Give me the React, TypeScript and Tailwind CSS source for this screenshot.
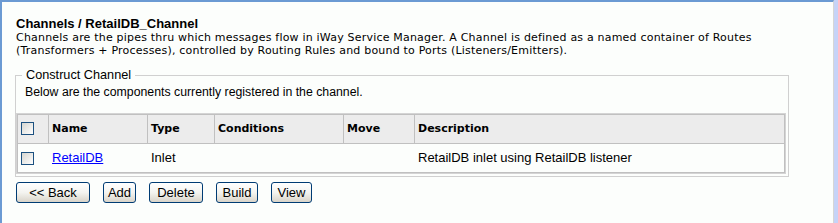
import React from "react";

function Check() {
  return (
    <span className="inline-block w-[13px] h-[13px] border border-[#1c5180] bg-linear-to-br from-[#d6d6d0] to-[#ffffff] align-middle" />
  );
}

const buttons: { label: string; w: string }[] = [
  { label: "<< Back", w: "w-[74px]" },
  { label: "Add", w: "w-[33px]" },
  { label: "Delete", w: "w-[54px]" },
  { label: "Build", w: "w-[42px]" },
  { label: "View", w: "w-[41px]" },
];

export default function App() {
  const th =
    "h-[30px] border-t border-r border-b border-[#c0c0c0] bg-[#ececec] pl-[3px] text-left align-middle font-['DejaVu_Sans',Verdana,sans-serif] text-[11px] font-bold";
  const td = "h-[29px] border-b border-[#c0c0c0] pl-[3px] text-left align-middle text-[13px]";
  return (
    <div className="flex w-[838px] h-[223px] overflow-hidden">
      <div className="w-[834px] h-full border-l-2 border-t-2 border-l-[#6b9ad3] border-t-[#6b9ad3] border-r border-r-[#d6d6d6] bg-[#fcfefc] pl-[14px] pt-[14px] font-['Liberation_Sans',Arial,sans-serif] text-black">
        <div className="text-[13px] leading-[15px] font-bold">Channels / RetailDB_Channel</div>
        <p className="font-['DejaVu_Sans',Verdana,sans-serif] text-[11px] leading-[13px] tracking-[0.2px]">
          Channels are the pipes thru which messages flow in iWay Service Manager. A Channel is defined as a named container of Routes
          <br />
          (Transformers + Processes), controlled by Routing Rules and bound to Ports (Listeners/Emitters).
        </p>
        <fieldset className="-ml-px mt-[11px] w-[774px] border border-[#d0d0d0] pb-[2px]">
          <legend className="ml-[6px] px-[4px] text-[12.7px] leading-[14px]">Construct Channel</legend>
          <div className="mt-[3px] pl-[9px] text-[12.3px] leading-[14px]">
            Below are the components currently registered in the channel.
          </div>
          <table className="mt-[14px] w-[770px] table-fixed border-separate border-spacing-0 border border-[#d4d4d4]">
            <colgroup>
              <col className="w-[32px]" />
              <col className="w-[99px]" />
              <col className="w-[67px]" />
              <col className="w-[129px]" />
              <col className="w-[71px]" />
              <col />
            </colgroup>
            <thead>
              <tr>
                <th className={th + " border-l text-center pl-0"}>
                  <Check />
                </th>
                <th className={th}>Name</th>
                <th className={th}>Type</th>
                <th className={th}>Conditions</th>
                <th className={th}>Move</th>
                <th className={th}>Description</th>
              </tr>
            </thead>
            <tbody>
              <tr>
                <td className={td + " border-l text-center pl-0"}>
                  <Check />
                </td>
                <td className={td}>
                  <a href="#" className="text-[#0000ff] underline">
                    RetailDB
                  </a>
                </td>
                <td className={td}>Inlet</td>
                <td className={td}></td>
                <td className={td}></td>
                <td className={td + " border-r"}>RetailDB inlet using RetailDB listener</td>
              </tr>
            </tbody>
          </table>
        </fieldset>
        <div className="mt-[5px] flex gap-[13px]">
          {buttons.map((b) => (
            <button
              key={b.label}
              className={
                b.w +
                " h-[21px] rounded-[3px] border border-[#003c74] bg-linear-to-b from-[#ffffff] via-[#f4f4f0] to-[#d9d4c9] text-[13px] leading-none text-black"
              }
            >
              {b.label}
            </button>
          ))}
        </div>
      </div>
      <div className="w-[4px] h-full bg-[#c6d3f7]" />
    </div>
  );
}
